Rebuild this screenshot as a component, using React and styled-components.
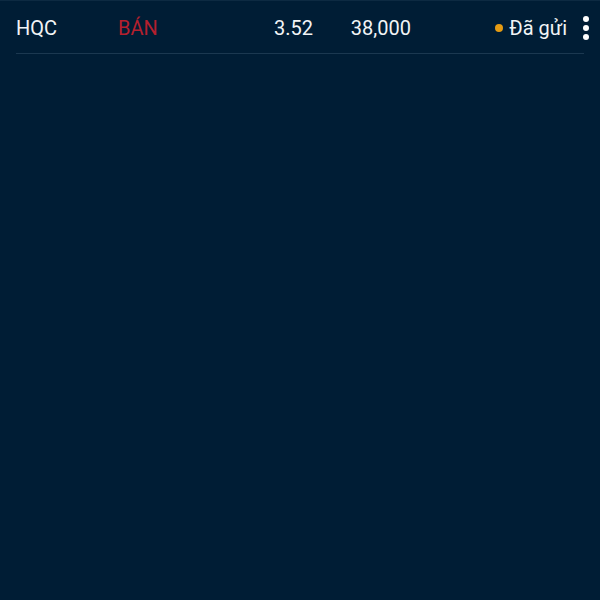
import styled, { createGlobalStyle } from "styled-components";

const GlobalStyle = createGlobalStyle`
  html, body {
    margin: 0;
    padding: 0;
    background: #001d35;
  }
  body {
    font-family: Roboto, "Liberation Sans", sans-serif;
  }
`;

const Page = styled.div`
  width: 600px;
  height: 600px;
  background: #001d35;
  border-top: 1px solid #0d2a42;
  box-sizing: border-box;
`;

const OrderRow = styled.div`
  display: flex;
  align-items: center;
  height: 53px;
  padding-top: 1px;
  box-sizing: border-box;
  margin: 0 16px;
  border-bottom: 1px solid #1b3850;
  color: #f2f4f6;
  font-size: 20px;
`;

const Cell = styled.div`
  width: ${(p) => p.$w}px;
  text-align: ${(p) => p.$align || "left"};
  color: ${(p) => p.$color || "inherit"};
  flex-shrink: 0;
`;

const Status = styled.div`
  display: flex;
  align-items: center;
  gap: 6px;
  margin-left: auto;
`;

const Dot = styled.span`
  width: 8px;
  height: 8px;
  border-radius: 50%;
  background: #e49b13;
`;

const Kebab = styled.div`
  display: flex;
  flex-direction: column;
  gap: 3px;
  margin-left: 16px;
  margin-right: -5px;

  span {
    width: 6px;
    height: 6px;
    border-radius: 50%;
    background: #fff;
  }
`;

export default function App() {
  return (
    <>
      <GlobalStyle />
      <Page>
        <OrderRow>
          <Cell $w={102}>HQC</Cell>
          <Cell $w={100} $color="#b4202e">BÁN</Cell>
          <Cell $w={95} $align="right">3.52</Cell>
          <Cell $w={98} $align="right">38,000</Cell>
          <Status>
            <Dot />
            Đã gửi
          </Status>
          <Kebab>
            <span />
            <span />
            <span />
          </Kebab>
        </OrderRow>
      </Page>
    </>
  );
}
